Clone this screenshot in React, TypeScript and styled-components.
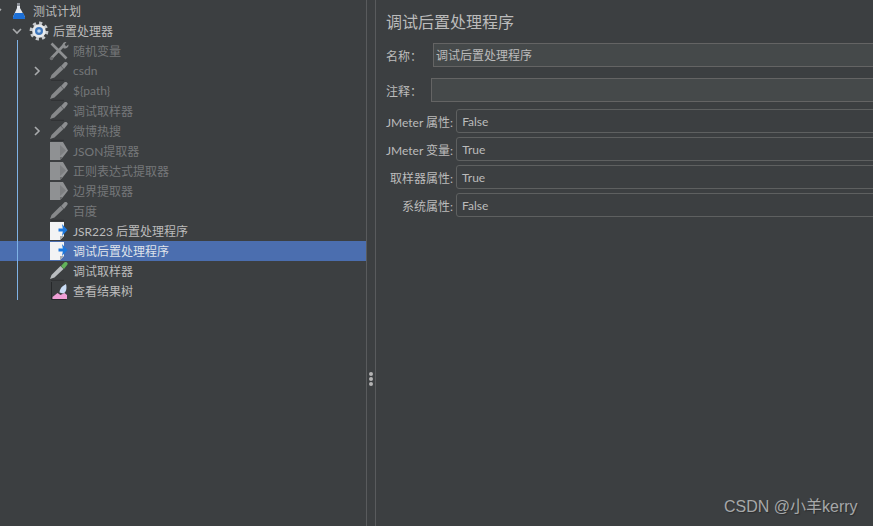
import { FunctionComponent } from "react";
import styled, { createGlobalStyle } from "styled-components";

const GlobalStyle = createGlobalStyle`
  html, body {
    margin: 0;
    padding: 0;
    height: 100%;
    background: #3c3f41;
  }
  #root {
    height: 100%;
  }
`;

const fontStack = `Lato, "Noto Sans CJK SC", sans-serif`;

const Layout = styled.main`
  position: relative;
  display: flex;
  width: 873px;
  height: 526px;
  overflow: hidden;
  background: #3c3f41;
  color: #bbbbbb;
  font-family: ${fontStack};
  font-size: 12px;
`;

const TreePane = styled.section`
  position: relative;
  flex: 0 0 366px;
  padding-top: 1px;
`;

const GuideLine = styled.div`
  position: absolute;
  left: 17px;
  top: 40px;
  width: 1px;
  height: 260px;
  background: #7fb2e5;
`;

const Row = styled.div<{ $level: number; $selected?: boolean }>`
  display: flex;
  align-items: center;
  height: 20px;
  padding-left: ${(p) => p.$level * 20}px;
  background: ${(p) => (p.$selected ? "#4b6eaf" : "transparent")};
  color: ${(p) => (p.$selected ? "#dfe3ea" : "#bbbbbb")};
`;

const ChevronSlot = styled.span`
  flex: 0 0 20px;
  margin-left: -11px;
  padding-left: 3px;
  box-sizing: border-box;
  display: flex;
  align-items: center;
`;

const IconSlot = styled.span`
  flex: 0 0 20px;
  height: 20px;
  display: flex;
  align-items: center;
  justify-content: center;
`;

const RowLabel = styled.span<{ $disabled?: boolean }>`
  margin-left: 4px;
  padding-bottom: 2px;
  white-space: nowrap;
  color: ${(p) => (p.$disabled ? "#757779" : "inherit")};
`;

const Divider = styled.div`
  flex: 0 0 10px;
  box-sizing: border-box;
  border-left: 1px solid #595b5d;
  border-right: 1px solid #595b5d;
  display: flex;
  flex-direction: column;
  align-items: center;
  justify-content: center;
  gap: 1px;
  padding-top: 232px;
`;

const GripDot = styled.span`
  width: 4px;
  height: 4px;
  border-radius: 50%;
  background: #b4b4b4;
`;

const DetailPane = styled.section`
  flex: 1;
  min-width: 0;
  padding: 10px 0 0 10px;
  overflow: hidden;
`;

const Title = styled.h1`
  margin: 0 0 9px;
  height: 24px;
  line-height: 24px;
  font-size: 16px;
  font-weight: 400;
  color: #bbbbbb;
`;

const TextRow = styled.div<{ $gap: number }>`
  display: flex;
  align-items: center;
  margin-bottom: ${(p) => p.$gap}px;
`;

const TextLabel = styled.label<{ $width: number }>`
  flex: 0 0 ${(p) => p.$width}px;
  white-space: nowrap;
`;

const TextField = styled.div`
  flex: 1;
  height: 24px;
  margin-right: -4px;
  box-sizing: border-box;
  padding-left: 2px;
  line-height: 23px;
  background: #45494a;
  border: 1px solid #646464;
`;

const ComboRow = styled.div`
  display: flex;
  align-items: center;
  margin-bottom: 4px;
`;

const ComboLabel = styled.label`
  flex: 0 0 67px;
  margin-right: 3px;
  text-align: right;
  white-space: nowrap;
`;

const ComboField = styled.div`
  flex: 1;
  height: 24px;
  margin-right: -4px;
  box-sizing: border-box;
  padding-left: 5px;
  line-height: 23px;
  border: 1px solid #5e6060;
  border-radius: 3px;
`;

const Watermark = styled.div`
  position: absolute;
  left: 724px;
  top: 497px;
  font-family: "Liberation Sans", "Noto Sans CJK SC", sans-serif;
  font-size: 16px;
  line-height: 20px;
  color: #a6a8a9;
  text-shadow: 1px 1px 1px #2c2e30;
  white-space: nowrap;
`;

const Chevron = () => (
  <svg width="10" height="10" viewBox="0 0 10 10">
    <path d="M3 1l4 4-4 4" fill="none" stroke="#a9abad" strokeWidth="1.6" />
  </svg>
);

const ChevronDown = () => (
  <svg width="10" height="10" viewBox="0 0 10 10">
    <path d="M1 3l4 4 4-4" fill="none" stroke="#a9abad" strokeWidth="1.6" />
  </svg>
);

const FlaskIcon = () => (
  <svg width="14" height="18" viewBox="0 0 14 18">
    <path d="M5 1h3v5l5 9v2H1v-2l4-9z" fill="#e4e8ee" />
    <path d="M2.800 11h8.400l1.800 4v2H1v-2z" fill="#1c6fd6" />
    <path d="M5 1h3v3H5z" fill="#8d9198" />
  </svg>
);

const GearIcon = () => (
  <svg width="20" height="20" viewBox="0 0 20 20">
    <circle cx="10" cy="10" r="7.8" fill="none" stroke="#c6c9cc" strokeWidth="3.200" strokeDasharray="3.100 3" />
    <circle cx="10" cy="10" r="6.800" fill="#e8eaec" />
    <circle cx="10" cy="10" r="4" fill="#3f78bd" />
    <circle cx="10" cy="10" r="1.800" fill="#bcd6f2" />
  </svg>
);

const ToolsIcon = () => (
  <svg width="20" height="20" viewBox="0 0 20 20">
    <path d="M2.500 2.500l15 15" stroke="#8e9092" strokeWidth="2.600" />
    <path d="M15.500 3.500L2.500 17" stroke="#8e9092" strokeWidth="2.600" />
    <path d="M13.500 4a3.500 3.500 0 0 1 4-3l-2 2.500 1.500 2 2.500-2a3.500 3.500 0 0 1-5 3.700z" fill="#8e9092" />
    <circle cx="2.500" cy="17.500" r="1.800" fill="#6d6f71" />
  </svg>
);

const DropperIcon = ({ active }: { active?: boolean }) => (
  <svg width="20" height="20" viewBox="0 0 20 20">
    <path d="M1 18l1.500-4 9-9 3 3-9 8.500z" fill={active ? "#b9bdc0" : "#87898b"} />
    <path d="M12 5l3.500-3.700c1-.8 2.900-.4 3.200 1.200.1.600-.2 1.200-.6 1.600L15 8z" fill={active ? "#62b25a" : "#8c8e90"} />
    <path d="M2 19.300h13" stroke="#2f3133" strokeWidth="1" />
  </svg>
);

const ExtractorIcon = () => (
  <svg width="20" height="20" viewBox="0 0 20 20">
    <path d="M1 1h13l5 8.500-5 6.500-3 3H1z" fill="#8f9193" />
    <path d="M11 19v-3h3z" fill="#6c6e70" />
    <path d="M11 4l6 5.500-6 5.500z" fill="#7d7f81" />
  </svg>
);

const ScriptIcon = () => (
  <svg width="20" height="20" viewBox="0 0 20 20">
    <path d="M1 1h14v14l-4 4H1z" fill="#f2f3f4" />
    <path d="M11 19v-4h4z" fill="#a9acae" />
    <path d="M13 3l5.500 6-5.500 6 .8-4.500H9.500v-3h4.300z" fill="#1e78dc" />
  </svg>
);

const ResultTreeIcon = () => (
  <svg width="20" height="20" viewBox="0 0 20 20">
    <path d="M2.500 1v17.500h15" fill="none" stroke="#26282a" strokeWidth="1" />
    <path d="M3.500 18v-2l5-4 3 2 4-2 2.500 2v4z" fill="#ef9fd6" />
    <path d="M10.500 11.500c0-4 3.500-7 6.500-8.500 1 4 .5 8.500-3 9.500z" fill="#c9dcf5" />
  </svg>
);

const treeRows = [
  { level: 0, label: "测试计划", icon: <FlaskIcon />, arrow: <ChevronDown /> },
  { level: 1, label: "后置处理器", icon: <GearIcon />, arrow: <ChevronDown /> },
  { level: 2, label: "随机变量", icon: <ToolsIcon />, disabled: true },
  { level: 2, label: "csdn", icon: <DropperIcon />, disabled: true, arrow: <Chevron /> },
  { level: 2, label: "${path}", icon: <DropperIcon />, disabled: true },
  { level: 2, label: "调试取样器", icon: <DropperIcon />, disabled: true },
  { level: 2, label: "微博热搜", icon: <DropperIcon />, disabled: true, arrow: <Chevron /> },
  { level: 2, label: "JSON提取器", icon: <ExtractorIcon />, disabled: true },
  { level: 2, label: "正则表达式提取器", icon: <ExtractorIcon />, disabled: true },
  { level: 2, label: "边界提取器", icon: <ExtractorIcon />, disabled: true },
  { level: 2, label: "百度", icon: <DropperIcon />, disabled: true },
  { level: 2, label: "JSR223 后置处理程序", icon: <ScriptIcon /> },
  { level: 2, label: "调试后置处理程序", icon: <ScriptIcon />, selected: true },
  { level: 2, label: "调试取样器", icon: <DropperIcon active /> },
  { level: 2, label: "查看结果树", icon: <ResultTreeIcon /> },
];

const comboRows = [
  { label: "JMeter 属性:", value: "False" },
  { label: "JMeter 变量:", value: "True" },
  { label: "取样器属性:", value: "True" },
  { label: "系统属性:", value: "False" },
];

const App: FunctionComponent = () => {
  return (
    <Layout>
      <GlobalStyle />
      <TreePane>
        {treeRows.map((row, i) => (
          <Row key={i} $level={row.level} $selected={row.selected}>
            <ChevronSlot>{row.arrow}</ChevronSlot>
            <IconSlot>{row.icon}</IconSlot>
            <RowLabel $disabled={row.disabled}>{row.label}</RowLabel>
          </Row>
        ))}
        <GuideLine />
      </TreePane>
      <Divider>
        <GripDot />
        <GripDot />
        <GripDot />
      </Divider>
      <DetailPane>
        <Title>调试后置处理程序</Title>
        <TextRow $gap={11}>
          <TextLabel $width={47}>名称：</TextLabel>
          <TextField>调试后置处理程序</TextField>
        </TextRow>
        <TextRow $gap={7}>
          <TextLabel $width={45}>注释：</TextLabel>
          <TextField />
        </TextRow>
        {comboRows.map((row) => (
          <ComboRow key={row.label}>
            <ComboLabel>{row.label}</ComboLabel>
            <ComboField>{row.value}</ComboField>
          </ComboRow>
        ))}
      </DetailPane>
      <Watermark>CSDN @小羊kerry</Watermark>
    </Layout>
  );
};

export default App;
